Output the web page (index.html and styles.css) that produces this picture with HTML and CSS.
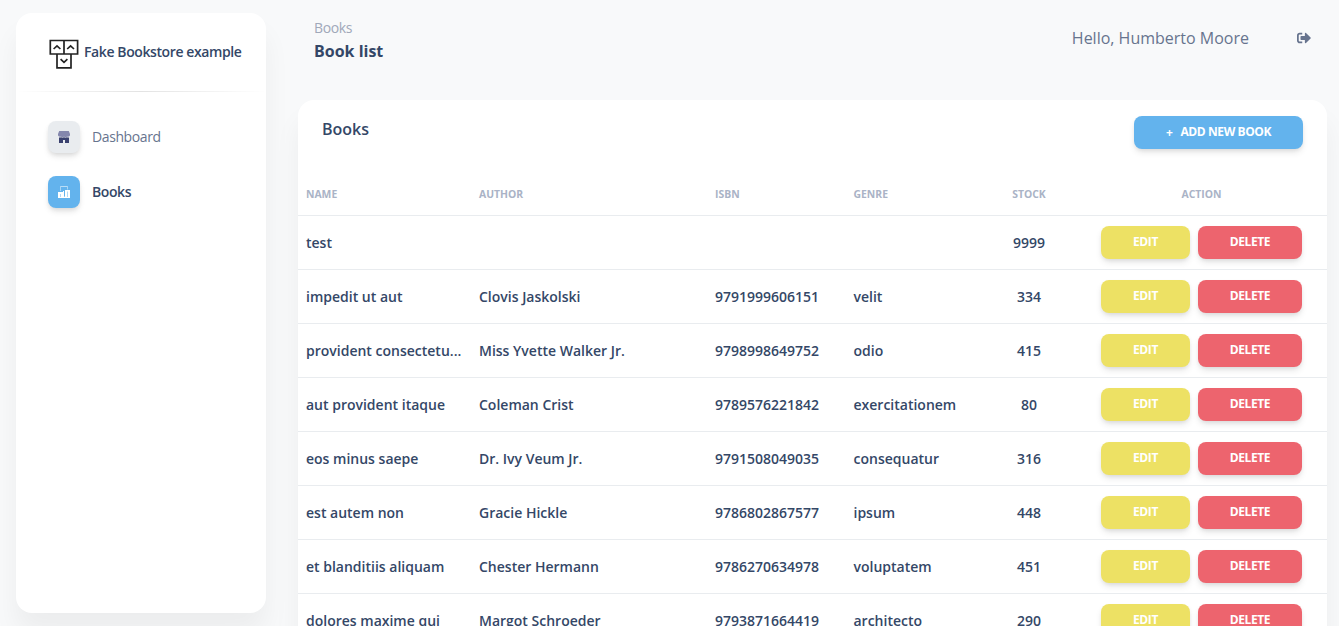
FILE: index.html
```html
<!DOCTYPE html>
<html lang="en">
<head>
<meta charset="utf-8">
<title>Book list</title>
<link rel="stylesheet" href="styles.css">
</head>
<body>
<div class="app">
<aside class="sidebar">
  <a class="brand">
    <svg class="brand-logo" viewBox="0 0 30 30" fill="none" stroke="#222" stroke-width="1.7"><path d="M1.300 1.500H28.600V15H1.300ZM15 1.500V15M8 15H22V28.800H8Z"/><path d="M4.600 10L8 6.800L11.400 10M18.200 10L21.600 6.800L25 10M11.600 20.200L15 23.400L18.400 20.200"/></svg>
    <span>Fake Bookstore example</span>
  </a>
  <hr class="divider">
  <nav class="menu">
    <a class="item"><span class="tile"><svg viewBox="0 0 12 12"><path fill="#8487ad" d="M1.200 0H10.800L12 3V4.200A2 2 0 0 1 9 5.400A2 2 0 0 1 6 5.400A2 2 0 0 1 3 5.400A2 2 0 0 1 0 4.200V3Z"/><path fill="#3a416f" d="M1 6.500Q2.200 6.800 3 6.300Q4.500 7 6 6.300Q7.500 7 9 6.300Q9.800 6.800 11 6.500V12H7V9H5V12H1Z"/></svg></span><span class="label">Dashboard</span></a>
    <a class="item active"><span class="tile"><svg viewBox="0 0 12 12" fill="#fff"><path fill-opacity=".55" d="M2.200 0H9.800V3.500H9V1H3V5H2.200Z"/><path d="M0 6H5V12H0ZM7 4H12V12H7ZM5 10.500H7V12H5ZM5 5H6V10.500H5Z"/><path fill="#63b3ed" fill-opacity=".5" d="M2 8H3V11H2ZM6 5H7V10.500H6ZM9 5.500H10V11H9Z"/></svg></span><span class="label">Books</span></a>
  </nav>
</aside>
<main class="main">
  <header class="topbar">
    <div><div class="crumb">Books</div><h1 class="page-title">Book list</h1></div>
    <div class="user"><span>Hello, Humberto Moore</span><svg class="logout" viewBox="0 0 512 512" fill="#67748e"><path d="M497 273L329 441c-15 15-41 4.500-41-17v-96H152c-13.300 0-24-10.700-24-24v-96c0-13.300 10.700-24 24-24h136V88c0-21.400 25.900-32 41-17l168 168c9.300 9.400 9.300 24.600 0 34zM192 436v-40c0-6.600-5.400-12-12-12H96c-17.700 0-32-14.300-32-32V160c0-17.700 14.300-32 32-32h84c6.600 0 12-5.400 12-12V76c0-6.600-5.400-12-12-12H96c-53 0-96 43-96 96v192c0 53 43 96 96 96h84c6.600 0 12-5.400 12-12z"/></svg></div>
  </header>
  <section class="card">
    <div class="card-head"><h2 class="card-title">Books</h2><button class="btn add"><span class="plus">+</span>Add new book</button></div>
    <table class="books">
      <colgroup><col class="c-name"><col class="c-author"><col class="c-isbn"><col class="c-genre"><col class="c-stock"><col></colgroup>
      <thead><tr><th>Name</th><th>Author</th><th>ISBN</th><th>Genre</th><th class="mid">Stock</th><th class="mid">Action</th></tr></thead>
      <tbody>
        <tr><td>test</td><td></td><td></td><td></td><td class="mid">9999</td><td><div class="actions"><button class="btn edit">Edit</button><button class="btn delete">Delete</button></div></td></tr>
        <tr><td>impedit ut aut</td><td>Clovis Jaskolski</td><td>9791999606151</td><td>velit</td><td class="mid">334</td><td><div class="actions"><button class="btn edit">Edit</button><button class="btn delete">Delete</button></div></td></tr>
        <tr><td>provident consectetu...</td><td>Miss Yvette Walker Jr.</td><td>9798998649752</td><td>odio</td><td class="mid">415</td><td><div class="actions"><button class="btn edit">Edit</button><button class="btn delete">Delete</button></div></td></tr>
        <tr><td>aut provident itaque</td><td>Coleman Crist</td><td>9789576221842</td><td>exercitationem</td><td class="mid">80</td><td><div class="actions"><button class="btn edit">Edit</button><button class="btn delete">Delete</button></div></td></tr>
        <tr><td>eos minus saepe</td><td>Dr. Ivy Veum Jr.</td><td>9791508049035</td><td>consequatur</td><td class="mid">316</td><td><div class="actions"><button class="btn edit">Edit</button><button class="btn delete">Delete</button></div></td></tr>
        <tr><td>est autem non</td><td>Gracie Hickle</td><td>9786802867577</td><td>ipsum</td><td class="mid">448</td><td><div class="actions"><button class="btn edit">Edit</button><button class="btn delete">Delete</button></div></td></tr>
        <tr><td>et blanditiis aliquam</td><td>Chester Hermann</td><td>9786270634978</td><td>voluptatem</td><td class="mid">451</td><td><div class="actions"><button class="btn edit">Edit</button><button class="btn delete">Delete</button></div></td></tr>
        <tr><td>dolores maxime qui</td><td>Margot Schroeder</td><td>9793871664419</td><td>architecto</td><td class="mid">290</td><td><div class="actions"><button class="btn edit">Edit</button><button class="btn delete">Delete</button></div></td></tr>
      </tbody>
    </table>
  </section>
</main>
</div>
</body>
</html>
```

FILE: styles.css
```css
* { box-sizing: border-box; }
body { margin: 0; height: 626px; overflow: hidden; background: #f8f9fa; color: #344767; font-family: "Open Sans", sans-serif; }
.app { display: flex; align-items: flex-start; gap: 32px; height: 626px; padding: 13px 12px 0 16px; overflow: hidden; }
.sidebar { flex: 0 0 250px; height: 600px; border-radius: 16px; background: #fff; box-shadow: 0 20px 27px 0 rgba(0, 0, 0, .05); }
.brand { display: flex; align-items: center; gap: 5px; height: 78px; padding-left: 33px; font-size: 14px; font-weight: 600; letter-spacing: -.4px; white-space: nowrap; }
.brand span, .label { padding-bottom: 2px; }
.brand-logo { width: 30px; height: 30px; margin-top: 3px; }
.divider { height: 1px; margin: 0; border: 0; background: linear-gradient(90deg, transparent, rgba(0, 0, 0, .11), transparent); }
.menu { display: flex; flex-direction: column; gap: 23px; padding: 29px 32px; }
.item { display: flex; align-items: center; gap: 12px; height: 32px; color: #67748e; font-size: 14px; letter-spacing: -.4px; }
.active { color: #344767; font-weight: 600; }
.tile { display: grid; place-items: center; width: 32px; height: 32px; border-radius: 8px; background: #e9ecef; box-shadow: 0 4px 6px -1px rgba(20, 20, 20, .12), 0 2px 4px -1px rgba(20, 20, 20, .07); }
.tile svg { width: 12px; height: 12px; }
.active .tile { background: #63b3ed; }
.main { flex: 1; min-width: 0; }
.topbar { display: flex; justify-content: space-between; height: 87px; padding: 4px 16px 0; }
.crumb { font-size: 14px; line-height: 21px; letter-spacing: -.4px; color: #a0a8b9; }
.page-title { margin: 0; font-size: 16px; line-height: 26px; font-weight: 700; }
.user { display: flex; align-items: center; gap: 48px; height: 42px; color: #67748e; font-size: 16px; }
.logout { width: 14px; height: 14px; }
.card { border-radius: 16px; background: #fff; box-shadow: 0 20px 27px 0 rgba(0, 0, 0, .05); }
.card-head { display: flex; justify-content: space-between; align-items: flex-start; height: 73px; padding: 16px 24px 0; }
.card-title { margin: 0; font-size: 16px; line-height: 26px; font-weight: 600; }
.btn { display: inline-flex; align-items: center; justify-content: center; height: 33px; padding: 0 32px 2px; border: 0; border-radius: 8px; color: #fff; font: 700 12px/17px "Open Sans", sans-serif; letter-spacing: -.4px; text-transform: uppercase; white-space: nowrap; box-shadow: 0 4px 7px -1px rgba(0, 0, 0, .11), 0 2px 4px -1px rgba(0, 0, 0, .07); }
.add { width: 169px; background: #63b3ed; }
.plus { margin: 2px 8px 0 0; }
.edit { width: 89px; background: #ede164; }
.delete { width: 104px; background: #ed646e; }
.books { width: 100%; table-layout: fixed; border-collapse: separate; border-spacing: 0; }
.c-name { width: 173px; }
.c-author { width: 236px; }
.c-isbn { width: 138.5px; }
.c-genre { width: 150.5px; }
.c-stock { width: 66px; }
.books th { height: 43px; padding: 0 8px; border-bottom: 1px solid #e9ecef; color: #aab3c6; font-size: 10.4px; font-weight: 700; text-align: left; text-transform: uppercase; }
.books td { height: 54px; padding: 0 8px; border-bottom: 1px solid #e9ecef; font-size: 14px; line-height: 21px; font-weight: 600; white-space: nowrap; }
.books .mid { text-align: center; }
.books th.mid:last-child { padding: 0 0 0 14px; }
.actions { display: flex; justify-content: flex-end; gap: 8px; padding-right: 17px; }
```
